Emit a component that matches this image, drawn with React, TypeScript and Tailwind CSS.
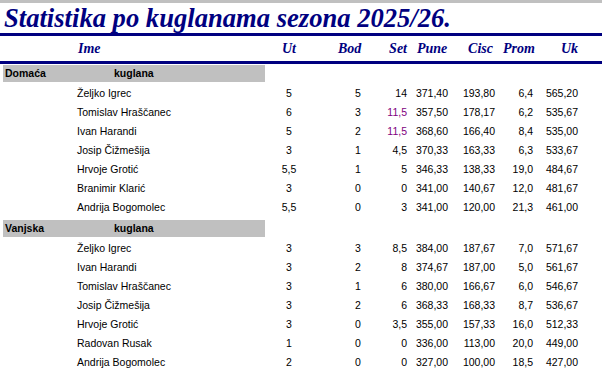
import React from "react";

type Row = [string, string, string, string, string, string, string, string, boolean?];

const home: Row[] = [
  ["Željko Igrec", "5", "5", "14", "371,40", "193,80", "6,4", "565,20"],
  ["Tomislav Hraščanec", "6", "3", "11,5", "357,50", "178,17", "6,2", "535,67", true],
  ["Ivan Harandi", "5", "2", "11,5", "368,60", "166,40", "8,4", "535,00", true],
  ["Josip Čižmešija", "3", "1", "4,5", "370,33", "163,33", "6,3", "533,67"],
  ["Hrvoje Grotić", "5,5", "1", "5", "346,33", "138,33", "19,0", "484,67"],
  ["Branimir Klarić", "3", "0", "0", "341,00", "140,67", "12,0", "481,67"],
  ["Andrija Bogomolec", "5,5", "0", "3", "341,00", "120,00", "21,3", "461,00"],
];

const away: Row[] = [
  ["Željko Igrec", "3", "3", "8,5", "384,00", "187,67", "7,0", "571,67"],
  ["Ivan Harandi", "3", "2", "8", "374,67", "187,00", "5,0", "561,67"],
  ["Tomislav Hraščanec", "3", "1", "6", "380,00", "166,67", "6,0", "546,67"],
  ["Josip Čižmešija", "3", "2", "6", "368,33", "168,33", "8,7", "536,67"],
  ["Hrvoje Grotić", "3", "0", "3,5", "355,00", "157,33", "16,0", "512,33"],
  ["Radovan Rusak", "1", "0", "0", "336,00", "113,00", "20,0", "449,00"],
  ["Andrija Bogomolec", "2", "0", "0", "327,00", "100,00", "18,5", "427,00"],
];

const grid =
  "grid grid-cols-[77px_193px_38px_30px_40px_29px_41px_47px_38px_45px_24px]";

function DataRow({ r }: { r: Row }) {
  return (
    <div className={`${grid} h-[19px] items-center whitespace-nowrap text-black`}>
      <div />
      <div>{r[0]}</div>
      <div className="text-center">{r[1]}</div>
      <div />
      <div className="text-center">{r[2]}</div>
      <div className={`text-right ${r[8] ? "text-[#800080]" : ""}`}>{r[3]}</div>
      <div className="text-right">{r[4]}</div>
      <div className="text-right">{r[5]}</div>
      <div className="text-right">{r[6]}</div>
      <div className="text-right">{r[7]}</div>
      <div />
    </div>
  );
}

function Section({ title, rows, top }: { title: string; rows: Row[]; top: string }) {
  return (
    <div className={top}>
      <div className="ml-[3px] flex h-[17px] w-[262px] items-center bg-[#c0c0c0] font-bold text-black">
        <span className="w-[111px] pl-[2px]">{title}</span>
        <span>kuglana</span>
      </div>
      <div className="mt-[2px]">
        {rows.map((r, i) => (
          <DataRow key={i} r={r} />
        ))}
      </div>
    </div>
  );
}

export default function App() {
  return (
    <div
      className="h-[372px] w-[602px] overflow-hidden bg-white text-[10.5px]"
      style={{ fontFamily: '"Liberation Sans", Arial, sans-serif' }}
    >
      <div className="h-[3px] w-full bg-[#c0c0c0]" />
      <div
        className="h-[30px] whitespace-nowrap pl-[4px] text-[26.6px] font-bold italic leading-[30px] text-[#000080]"
        style={{ fontFamily: '"Liberation Serif", "Times New Roman", serif' }}
      >
        Statistika po kuglanama sezona 2025/26.
      </div>
      <div className="h-[3px] w-full bg-[#000080]" />
      <div
        className={`${grid} h-[25px] items-center whitespace-nowrap text-[14px] font-bold italic text-[#000080]`}
        style={{ fontFamily: '"Liberation Serif", "Times New Roman", serif' }}
      >
        <div />
        <div className="pl-[1px]">Ime</div>
        <div className="text-center">Ut</div>
        <div />
        <div>Bod</div>
        <div className="text-right">Set</div>
        <div className="pl-[10px]">Pune</div>
        <div className="pr-[2px] text-right">Cisc</div>
        <div className="pl-[8px]">Prom</div>
        <div className="text-right">Uk</div>
        <div />
      </div>
      <div className="h-[3px] w-full bg-[#000080]" />
      <Section title="Domaća" rows={home} top="mt-[1px]" />
      <Section title="Vanjska" rows={away} top="mt-[3px]" />
    </div>
  );
}
